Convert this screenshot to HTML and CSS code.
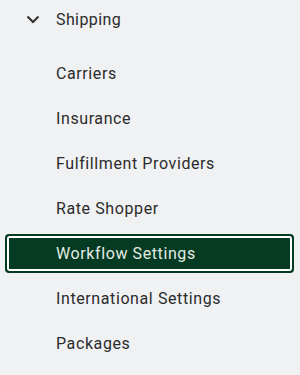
FILE: index.html
```html
<!DOCTYPE html>
<html lang="en">
<head>
    <meta charset="UTF-8">
    <meta name="viewport" content="width=device-width, initial-scale=1.0">
    <title>Shipping Settings</title>
    <link rel="stylesheet" href="styles.css">
</head>
<body>

<nav class="side-nav">
    <div class="nav-group">
        <svg class="chevron" width="14" height="9" viewBox="0 0 14 9">
            <path d="M1.5 1.5 L7 7 L12.5 1.5" fill="none" stroke="#2f2f2f" stroke-width="2"/>
        </svg>
        <span>Shipping</span>
    </div>
    <ul class="nav-list">
        <li class="nav-item">Carriers</li>
        <li class="nav-item">Insurance</li>
        <li class="nav-item">Fulfillment Providers</li>
        <li class="nav-item">Rate Shopper</li>
        <li class="nav-item active">Workflow Settings</li>
        <li class="nav-item">International Settings</li>
        <li class="nav-item">Packages</li>
    </ul>
</nav>

</body>
</html>
```

FILE: styles.css
```css
body {
    margin: 0;
    font-family: Roboto, "Liberation Sans", sans-serif;
    background-color: #f0f1f3;
    color: #2b2b2b;
}
.side-nav {
    width: 300px;
}
.nav-group {
    display: flex;
    align-items: center;
    height: 39px;
    font-size: 16px;
    letter-spacing: 0.4px;
}
.chevron {
    margin-left: 26px;
    margin-right: 16px;
}
.nav-list {
    list-style: none;
    display: flex;
    flex-direction: column;
    gap: 6px;
    margin: 15px 0 0 0;
    padding: 0;
}
.nav-item {
    display: flex;
    align-items: center;
    height: 39px;
    margin: 0 6px 0 5px;
    padding-left: 49px;
    font-size: 16px;
    letter-spacing: 0.6px;
    border: 2px solid transparent;
    border-radius: 4px;
    box-sizing: border-box;
}
.nav-item.active {
    background-color: #053b22;
    border-color: #053b22;
    box-shadow: inset 0 0 0 2px #ffffff;
    color: #e3ebe5;
}
```
